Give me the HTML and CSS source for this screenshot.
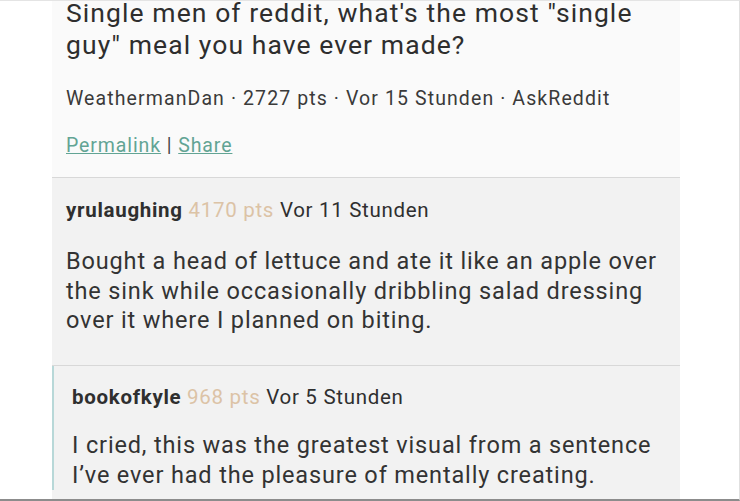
FILE: index.html
```html
<!DOCTYPE html>
<html>
<head>
<meta charset="utf-8">
<link rel="stylesheet" href="styles.css">
</head>
<body>
<div class="frame">
  <div class="col">
    <div class="post">
      <h1 class="title">Single men of reddit, what's the most "single guy" meal you have ever made?</h1>
      <div class="meta">WeathermanDan · 2727 pts · Vor 15 Stunden · AskReddit</div>
      <div class="links"><a class="link">Permalink</a> | <a class="link">Share</a></div>
    </div>
    <div class="comment">
      <div class="cmeta"><span class="user">yrulaughing</span> <span class="pts">4170 pts</span> Vor 11 Stunden</div>
      <p class="body">Bought a head of lettuce and ate it like an apple over the sink while occasionally dribbling salad dressing over it where I planned on biting.</p>
      <div class="reply">
        <div class="cmeta"><span class="user">bookofkyle</span> <span class="pts">968 pts</span> Vor 5 Stunden</div>
        <p class="body">I cried, this was the greatest visual from a sentence I’ve ever had the pleasure of mentally creating.</p>
      </div>
    </div>
  </div>
</div>
</body>
</html>
```

FILE: styles.css
```css
html, body {
  margin: 0;
  padding: 0;
  background: #fff;
}
.frame {
  width: 740px;
  height: 501px;
  box-sizing: border-box;
  border-top: 1px solid #e4e4e4;
  border-right: 1px solid #e0e0e0;
  border-bottom: 2px solid #8c8c8c;
  overflow: hidden;
  background: #fff;
  font-family: Roboto, "Liberation Sans", sans-serif;
  color: #333;
}
.col {
  margin-left: 52px;
  width: 628px;
}
.post {
  background: #fafafa;
  padding: 0 0 0 14px;
  height: 176px;
  border-bottom: 1px solid #d8d8d8;
  overflow: hidden;
}
.title {
  margin: -4px 0 0 0;
  font-size: 26.5px;
  line-height: 32px;
  letter-spacing: 1.08px;
  font-weight: 400;
  color: #2e2e2e;
  width: 600px;
}
.meta {
  margin-top: 26px;
  font-size: 19.5px;
  line-height: 24px;
  letter-spacing: 1.1px;
  color: #3a3a3a;
}
.links {
  margin-top: 23px;
  font-size: 19.5px;
  line-height: 24px;
  letter-spacing: 0.9px;
  color: #444;
}
.link {
  color: #62a494;
  text-decoration: underline;
}
.comment {
  background: #f2f2f2;
  height: 400px;
}
.comment > .cmeta {
  padding: 20px 0 0 14px;
}
.cmeta {
  font-size: 20.5px;
  line-height: 24px;
  letter-spacing: 0.7px;
  color: #2f2f2f;
}
.user {
  font-weight: 700;
}
.pts {
  color: #dcc3a6;
}
.body {
  margin: 0;
  font-size: 23.5px;
  line-height: 29.5px;
  letter-spacing: 0.85px;
  color: #333;
}
.comment > .body {
  padding: 25px 14px 0 14px;
  height: 144px;
  box-sizing: border-box;
  border-bottom: 1px solid #d8d8d8;
}
.reply {
  border-left: 2px solid #b8d8d8;
  padding: 19px 0 0 18px;
}
.reply .body {
  margin-top: 22px;
  padding-right: 10px;
}
```
